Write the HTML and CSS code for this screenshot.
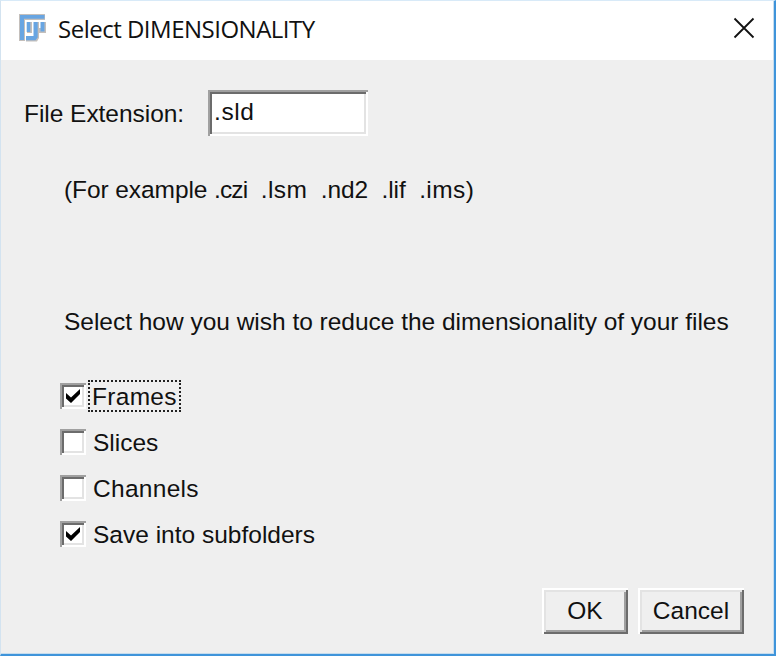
FILE: index.html
```
<!DOCTYPE html>
<html lang="en">
<head>
<meta charset="utf-8">
<title>Select DIMENSIONALITY</title>
<link rel="stylesheet" href="styles.css">
</head>
<body>
<main class="dialog">
  <header class="titlebar">
    <svg class="logo" viewBox="0 0 28 28" width="28" height="28">
      <g fill="#c4bfbb">
        <path d="M0 0H26V6H6V27H0Z"/>
        <path d="M8 8H13V19H8ZM15 8H20V24L18 27.500H7V22H15ZM22 8H27V19H22ZM20 14H23V19H20Z"/>
      </g>
      <g fill="#68a5e2">
        <path d="M1 1H25.500V4.700H5V26H1Z"/>
        <path d="M7.700 8H11.300V18H7.700ZM14.500 8H18.700V23.500L16.500 26.300H7V22H14.500ZM21.500 8H25.500V17.500H21.500Z"/>
      </g>
    </svg>
    <h1 class="title">Select DIMENSIONALITY</h1>
    <svg class="close" viewBox="0 0 22 22" width="22" height="22"><path d="M1.500 1.500L20.500 20.500M20.500 1.500L1.500 20.500"/></svg>
  </header>
  <section class="content">
    <div class="field">
      <label class="field-label" for="ext">File Extension:</label>
      <input class="field-input" id="ext" type="text" value=".sld">
    </div>
    <p class="hint">(For example <span class="narrow">.czi</span>&nbsp; <span class="wide">.lsm</span>&nbsp; .nd2&nbsp; .lif&nbsp; <span class="wide">.ims)</span></p>
    <p class="message">Select how you wish to reduce the dimensionality of your files</p>
    <div class="options">
      <div class="option"><span class="box"><svg class="tick" viewBox="0 0 16 16"><path d="M1 5L6 9.500L15 1V6L6 15L1 10.500Z"/></svg></span><span class="option-label focused">Frames</span></div>
      <div class="option"><span class="box"></span><span class="option-label">Slices</span></div>
      <div class="option"><span class="box"></span><span class="option-label channels">Channels</span></div>
      <div class="option"><span class="box"><svg class="tick" viewBox="0 0 16 16"><path d="M1 5L6 9.500L15 1V6L6 15L1 10.500Z"/></svg></span><span class="option-label">Save into subfolders</span></div>
    </div>
    <footer class="actions">
      <button class="button ok">OK</button>
      <button class="button cancel">Cancel</button>
    </footer>
  </section>
</main>
</body>
</html>
```
FILE: styles.css
```
* { box-sizing: border-box; }
body { margin: 0; }
.dialog {
  width: 776px;
  height: 656px;
  display: flex;
  flex-direction: column;
  background: #efefef;
  border-style: solid;
  border-width: 1px 2px 2px 1px;
  border-color: #d8eaf8 #3f94da #3f94da #d3e3f0;
  font: 24.5px/28px "Liberation Sans", Arial, sans-serif;
  color: #111;
  box-shadow: inset -1px -1px #c5dcee;
}
.titlebar {
  height: 59px;
  margin-right: 1px;
  padding: 0 18px;
  display: flex;
  align-items: center;
  background: #fff;
}
.logo { margin-top: -5px; }
.title {
  margin: -3px auto 0 11px;
  font: 24px/34px "Open Sans", "Noto Sans", sans-serif;
  letter-spacing: -0.5px;
  white-space: nowrap;
}
.close { margin-top: -5px; fill: none; stroke: #111; stroke-width: 1.8; }
.content { display: flex; flex-direction: column; flex: 1; }
.field { display: flex; align-items: center; height: 46px; margin: 30px 0 0 22px; }
.field-label { width: 185px; padding: 1px 0 0 1px; letter-spacing: -0.04px; white-space: nowrap; }
.field-input {
  width: 160px;
  height: 46px;
  padding: 0 6px 3px;
  border: 0;
  background: #fff;
  box-shadow: inset 2px 2px #a0a0a0, inset -2px -2px #fff, inset 4px 4px #6c6c6c, inset -4px -4px #e3e3e3;
  font: inherit;
  letter-spacing: 0.6px;
  color: inherit;
  outline: 0;
}
.hint { margin: 40px 0 0 63px; letter-spacing: -0.08px; }
.narrow { letter-spacing: -0.9px; }
.wide { letter-spacing: 0.4px; }
.message { margin: 104px 0 0 63px; letter-spacing: -0.02px; }
.hint, .message { white-space: nowrap; height: 28px; }
.options { margin: 37px 0 0 59px; }
.option { display: flex; align-items: center; height: 46px; gap: 3px; }
.box {
  width: 26px;
  height: 26px;
  padding: 5px;
  background: #fff;
  box-shadow: inset 2px 2px #a0a0a0, inset -2px -2px #fff, inset 4px 4px #6c6c6c, inset -4px -4px #e3e3e3;
}
.tick { display: block; width: 16px; height: 16px; }
.option-label { padding: 2px 3px 0 4px; white-space: nowrap; }
.focused { height: 30px; padding-left: 3px; letter-spacing: 0.3px; outline: 2px dotted #222; outline-offset: -1px; }
.channels { letter-spacing: 0.3px; }
.actions { display: flex; justify-content: flex-end; gap: 10px; margin: 31px 30px 0 0; }
.button {
  height: 46px;
  padding: 0;
  border: 0;
  background: #efefef;
  box-shadow: inset 2px 2px #fff, inset -2px -2px #6c6c6c, inset 4px 4px #e3e3e3, inset -4px -4px #a0a0a0;
  font: inherit;
  color: inherit;
}
.ok { width: 86px; }
.cancel { width: 106px; }
```
